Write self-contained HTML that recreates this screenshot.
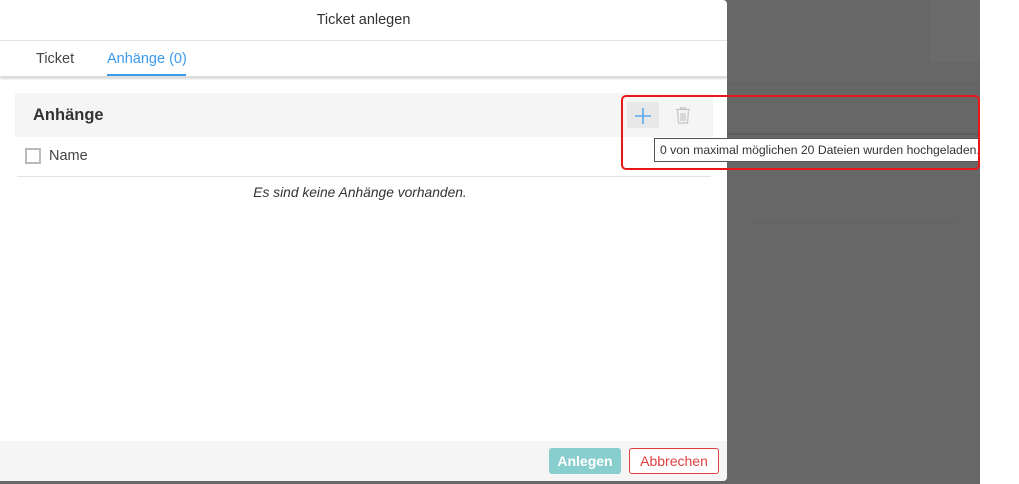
<!DOCTYPE html>
<html><head><meta charset="utf-8"><style>
*{box-sizing:border-box;margin:0;padding:0}
body{width:1019px;height:484px;overflow:hidden;background:#fff;font-family:"Liberation Sans",sans-serif;position:relative}
.ov{position:absolute;left:0;top:0;width:980px;height:484px;background:#676767}
.dlg{position:absolute;left:0;top:0;width:727px;height:481px;background:#fff;border-radius:0 4px 4px 0;overflow:hidden}
.title{height:41px;border-bottom:1px solid #e4e4e4;text-align:center;line-height:41px;font-size:14.5px;color:#333}
.tabs{height:36px;position:relative;box-shadow:0 2px 2px rgba(0,0,0,.15);border-bottom:1px solid #ddd}
.tab{position:absolute;top:10px;font-size:14.5px;color:#444}
.tab.a{color:#3a9af0}
.ul{position:absolute;left:107px;top:74px;width:79px;height:2px;background:#3a9af0}
.hdr{position:absolute;left:15px;top:93px;width:698px;height:44px;background:#f5f5f5}
.hdr span{position:absolute;left:18px;top:13px;font-size:16.5px;color:#333;font-weight:bold}
.plus{position:absolute;left:627px;top:102px;width:32px;height:26px;background:#e8e8e8;border-radius:2px}
.cb{position:absolute;left:25px;top:148px;width:16px;height:16px;border:2px solid #bbb}
.name{position:absolute;left:49px;top:148px;font-size:14.5px;color:#444}
.line{position:absolute;left:17px;top:176px;width:694px;height:1px;background:#e4e4e4}
.empty{position:absolute;left:0;width:720px;text-align:center;top:185px;font-size:13.8px;font-style:italic;color:#333}
.foot{position:absolute;left:0;top:441px;width:727px;height:40px;background:#f5f5f5}
.b1{position:absolute;left:549px;top:448px;width:72px;height:26px;background:#88cece;color:#fff;font-weight:bold;font-size:14px;text-align:center;line-height:26px;border-radius:3px}
.b2{position:absolute;left:629px;top:448px;width:90px;height:26px;border:1px solid #e04040;color:#e04040;font-size:14px;text-align:center;line-height:24px;border-radius:3px;background:#fff}
.tip{position:absolute;left:654px;top:138px;width:325px;height:24px;background:#fff;border:1px solid #555;font-size:12.2px;line-height:22px;padding-left:5px;color:#333;white-space:nowrap}
.red{position:absolute;left:621px;top:95px;width:359px;height:75px;border:2px solid #e81818;border-radius:5px}
.blur{position:absolute;left:930px;top:0;width:50px;height:62px;background:#6b6b6b}
.gl{position:absolute;background:#606060;height:1px}
</style></head><body>
<div class="ov"></div>
<div class="blur"></div>
<div class="gl" style="left:727px;top:84px;width:253px"></div>
<div class="gl" style="left:727px;top:133px;width:253px;background:#5c5c5c;height:2px"></div>
<div class="gl" style="left:755px;top:222px;width:200px"></div>
<div class="dlg">
<div class="title">Ticket anlegen</div>
<div class="tabs"><span class="tab" style="left:36px">Ticket</span><span class="tab a" style="left:107px">Anhänge (0)</span></div>
<div class="ul"></div>
<div class="hdr"><span>Anhänge</span></div>
<div class="plus"></div>
<svg style="position:absolute;left:633px;top:106px" width="20" height="20"><path d="M10 2V18M2 10H18" stroke="#5aa8f0" stroke-width="1.6"/></svg>
<svg style="position:absolute;left:674px;top:106px" width="18" height="18"><path d="M2 3.5H16M6.5 3.5V2H11.5V3.5M3.5 4.5L4.5 17H13.5L14.5 4.5M7 7V15M9 7V15M11 7V15" stroke="#c4c4c4" stroke-width="1.2" fill="none"/></svg>
<div class="cb"></div><div class="name">Name</div>
<div class="line"></div>
<div class="empty">Es sind keine Anhänge vorhanden.</div>
<div class="foot"></div>
<div class="b1">Anlegen</div><div class="b2">Abbrechen</div>
</div>
<div class="tip">0 von maximal möglichen 20 Dateien wurden hochgeladen.</div>
<div class="red"></div>
</body></html>
